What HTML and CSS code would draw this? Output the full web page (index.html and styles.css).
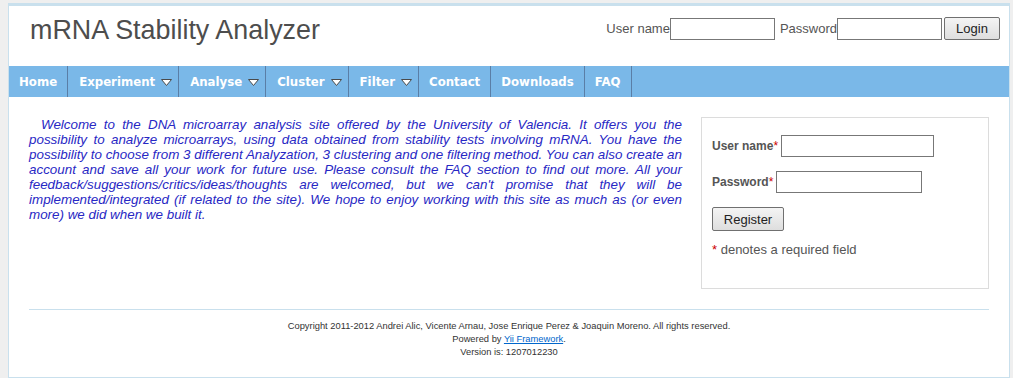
FILE: index.html
```
<!DOCTYPE html>
<html>
<head>
<meta charset="utf-8">
<title>mRNA Stability Analyzer</title>
<link rel="stylesheet" href="styles.css">
</head>
<body>
<div class="page">
  <div class="header">
    <div class="logo">mRNA Stability Analyzer</div>
    <form class="login">
      <label class="login-label">User name</label><input class="login-input" type="text">
      <label class="login-label pw">Password</label><input class="login-input" type="password">
      <button class="btn login-btn" type="button">Login</button>
    </form>
  </div>
  <ul class="nav">
    <li class="nav-item">Home</li>
    <li class="nav-item drop">Experiment<svg class="arrow" width="11" height="7" viewBox="0 0 11 7"><polygon points="0.5,0.5 10.5,0.5 5.5,6.5" fill="#fff" stroke="#4a4a4a" stroke-width="1"/></svg></li>
    <li class="nav-item drop">Analyse<svg class="arrow" width="11" height="7" viewBox="0 0 11 7"><polygon points="0.5,0.5 10.5,0.5 5.5,6.5" fill="#fff" stroke="#4a4a4a" stroke-width="1"/></svg></li>
    <li class="nav-item drop">Cluster<svg class="arrow" width="11" height="7" viewBox="0 0 11 7"><polygon points="0.5,0.5 10.5,0.5 5.5,6.5" fill="#fff" stroke="#4a4a4a" stroke-width="1"/></svg></li>
    <li class="nav-item drop">Filter<svg class="arrow" width="11" height="7" viewBox="0 0 11 7"><polygon points="0.5,0.5 10.5,0.5 5.5,6.5" fill="#fff" stroke="#4a4a4a" stroke-width="1"/></svg></li>
    <li class="nav-item">Contact</li>
    <li class="nav-item">Downloads</li>
    <li class="nav-item">FAQ</li>
  </ul>
  <div class="main">
    <p class="welcome">Welcome to the DNA microarray analysis site offered by the University of Valencia. It offers you the possibility to analyze microarrays, using data obtained from stability tests involving mRNA. You have the possibility to choose from 3 different Analyzation, 3 clustering and one filtering method. You can also create an account and save all your work for future use. Please consult the FAQ section to find out more. All your feedback/suggestions/critics/ideas/thoughts are welcomed, but we can't promise that they will be implemented/integrated (if related to the site). We hope to enjoy working with this site as much as (or even more) we did when we built it.</p>
    <form class="register">
      <div class="row"><label class="reg-label">User name<span class="req">*</span></label><input class="reg-input" type="text"></div>
      <div class="row"><label class="reg-label">Password<span class="req">*</span></label><input class="reg-input pw-input" type="password"></div>
      <div class="row"><button class="btn reg-btn" type="button">Register</button></div>
      <p class="note"><span class="req">*</span> denotes a required field</p>
    </form>
  </div>
  <div class="footer">
    <div>Copyright 2011-2012 Andrei Alic, Vicente Arnau, Jose Enrique Perez &amp; Joaquin Moreno. All rights reserved.</div>
    <div>Powered by <a class="link" href="#">Yii Framework</a>.</div>
    <div>Version is: 1207012230</div>
  </div>
</div>
</body>
</html>
```
FILE: styles.css
```
html, body {
  margin: 0;
  padding: 0;
}
body {
  background: #efefef;
  font-family: "Liberation Sans", Arial, sans-serif;
}
.page {
  margin: 3px 3px 0 8px;
  background: #fff;
  border: 1px solid #c9e0ed;
  border-top-width: 3px;
}
.header {
  height: 60px;
  display: flex;
  justify-content: space-between;
  align-items: flex-start;
}
.logo {
  padding: 9px 0 0 21px;
  font-size: 26.9px;
  line-height: 30px;
  color: #4d4d4d;
}
.login {
  margin: 11px 9px 0 0;
  display: flex;
  align-items: center;
  font-size: 13px;
  color: #555;
}
.login-label.pw {
  margin-left: 5px;
}
.login-input {
  width: 105px;
  height: 22px;
  box-sizing: border-box;
  border: 1px solid #777;
  margin: 0;
  padding: 0;
  background: #fff;
}
.btn {
  font-family: "Liberation Sans", Arial, sans-serif;
  font-size: 13px;
  color: #222;
  border: 1px solid #707070;
  background: linear-gradient(#f4f4f4, #dedede);
  border-radius: 2px;
  padding: 0;
  margin: 0;
}
.login-btn {
  width: 56px;
  height: 23px;
  margin-left: 2px;
}
.nav {
  list-style: none;
  margin: 0;
  padding: 0;
  height: 31px;
  background: #7ab8e8;
  display: flex;
}
.nav-item {
  font-family: "DejaVu Sans", Verdana, sans-serif;
  font-weight: bold;
  font-size: 11.75px;
  color: #fff;
  line-height: 31px;
  padding: 1px 10px 0 10px;
  border-right: 1px solid #5a7ea6;
  display: flex;
  align-items: center;
}
.nav-item.drop {
  padding-left: 11px;
  padding-right: 6px;
}
.arrow {
  margin-left: 6px;
  display: block;
}
.main {
  display: flex;
  padding: 20px 20px 20px 20px;
  gap: 19px;
}
.welcome {
  margin: 0;
  width: 653px;
  flex: none;
  font-size: 13.4px;
  line-height: 15px;
  font-style: italic;
  color: #2828c4;
  text-align: justify;
  text-indent: 12px;
}
.register {
  flex: 1;
  height: 172px;
  border: 1px solid #dcdcdc;
  padding: 17px 0 0 10px;
  box-sizing: border-box;
  margin: 0;
}
.row {
  display: flex;
  align-items: center;
  margin-bottom: 14px;
}
.reg-label {
  font-size: 12px;
  font-weight: bold;
  color: #555;
  margin-right: 3px;
}
.req {
  color: #c00;
  font-weight: normal;
}
.reg-input {
  width: 153px;
  height: 22px;
  box-sizing: border-box;
  border: 1px solid #777;
  margin: 0;
  padding: 0;
}
.pw-input {
  width: 146px;
}
.reg-btn {
  width: 72px;
  height: 24px;
}
.note {
  margin: -3px 0 0 0;
  font-size: 13px;
  line-height: 15px;
  color: #555;
}
.footer {
  margin: 0 20px;
  border-top: 1px solid #c9e0ed;
  padding: 10px 0 18px 0;
  text-align: center;
  font-size: 9.33px;
  line-height: 13px;
  color: #333;
}
.link {
  color: #06c;
}
```
